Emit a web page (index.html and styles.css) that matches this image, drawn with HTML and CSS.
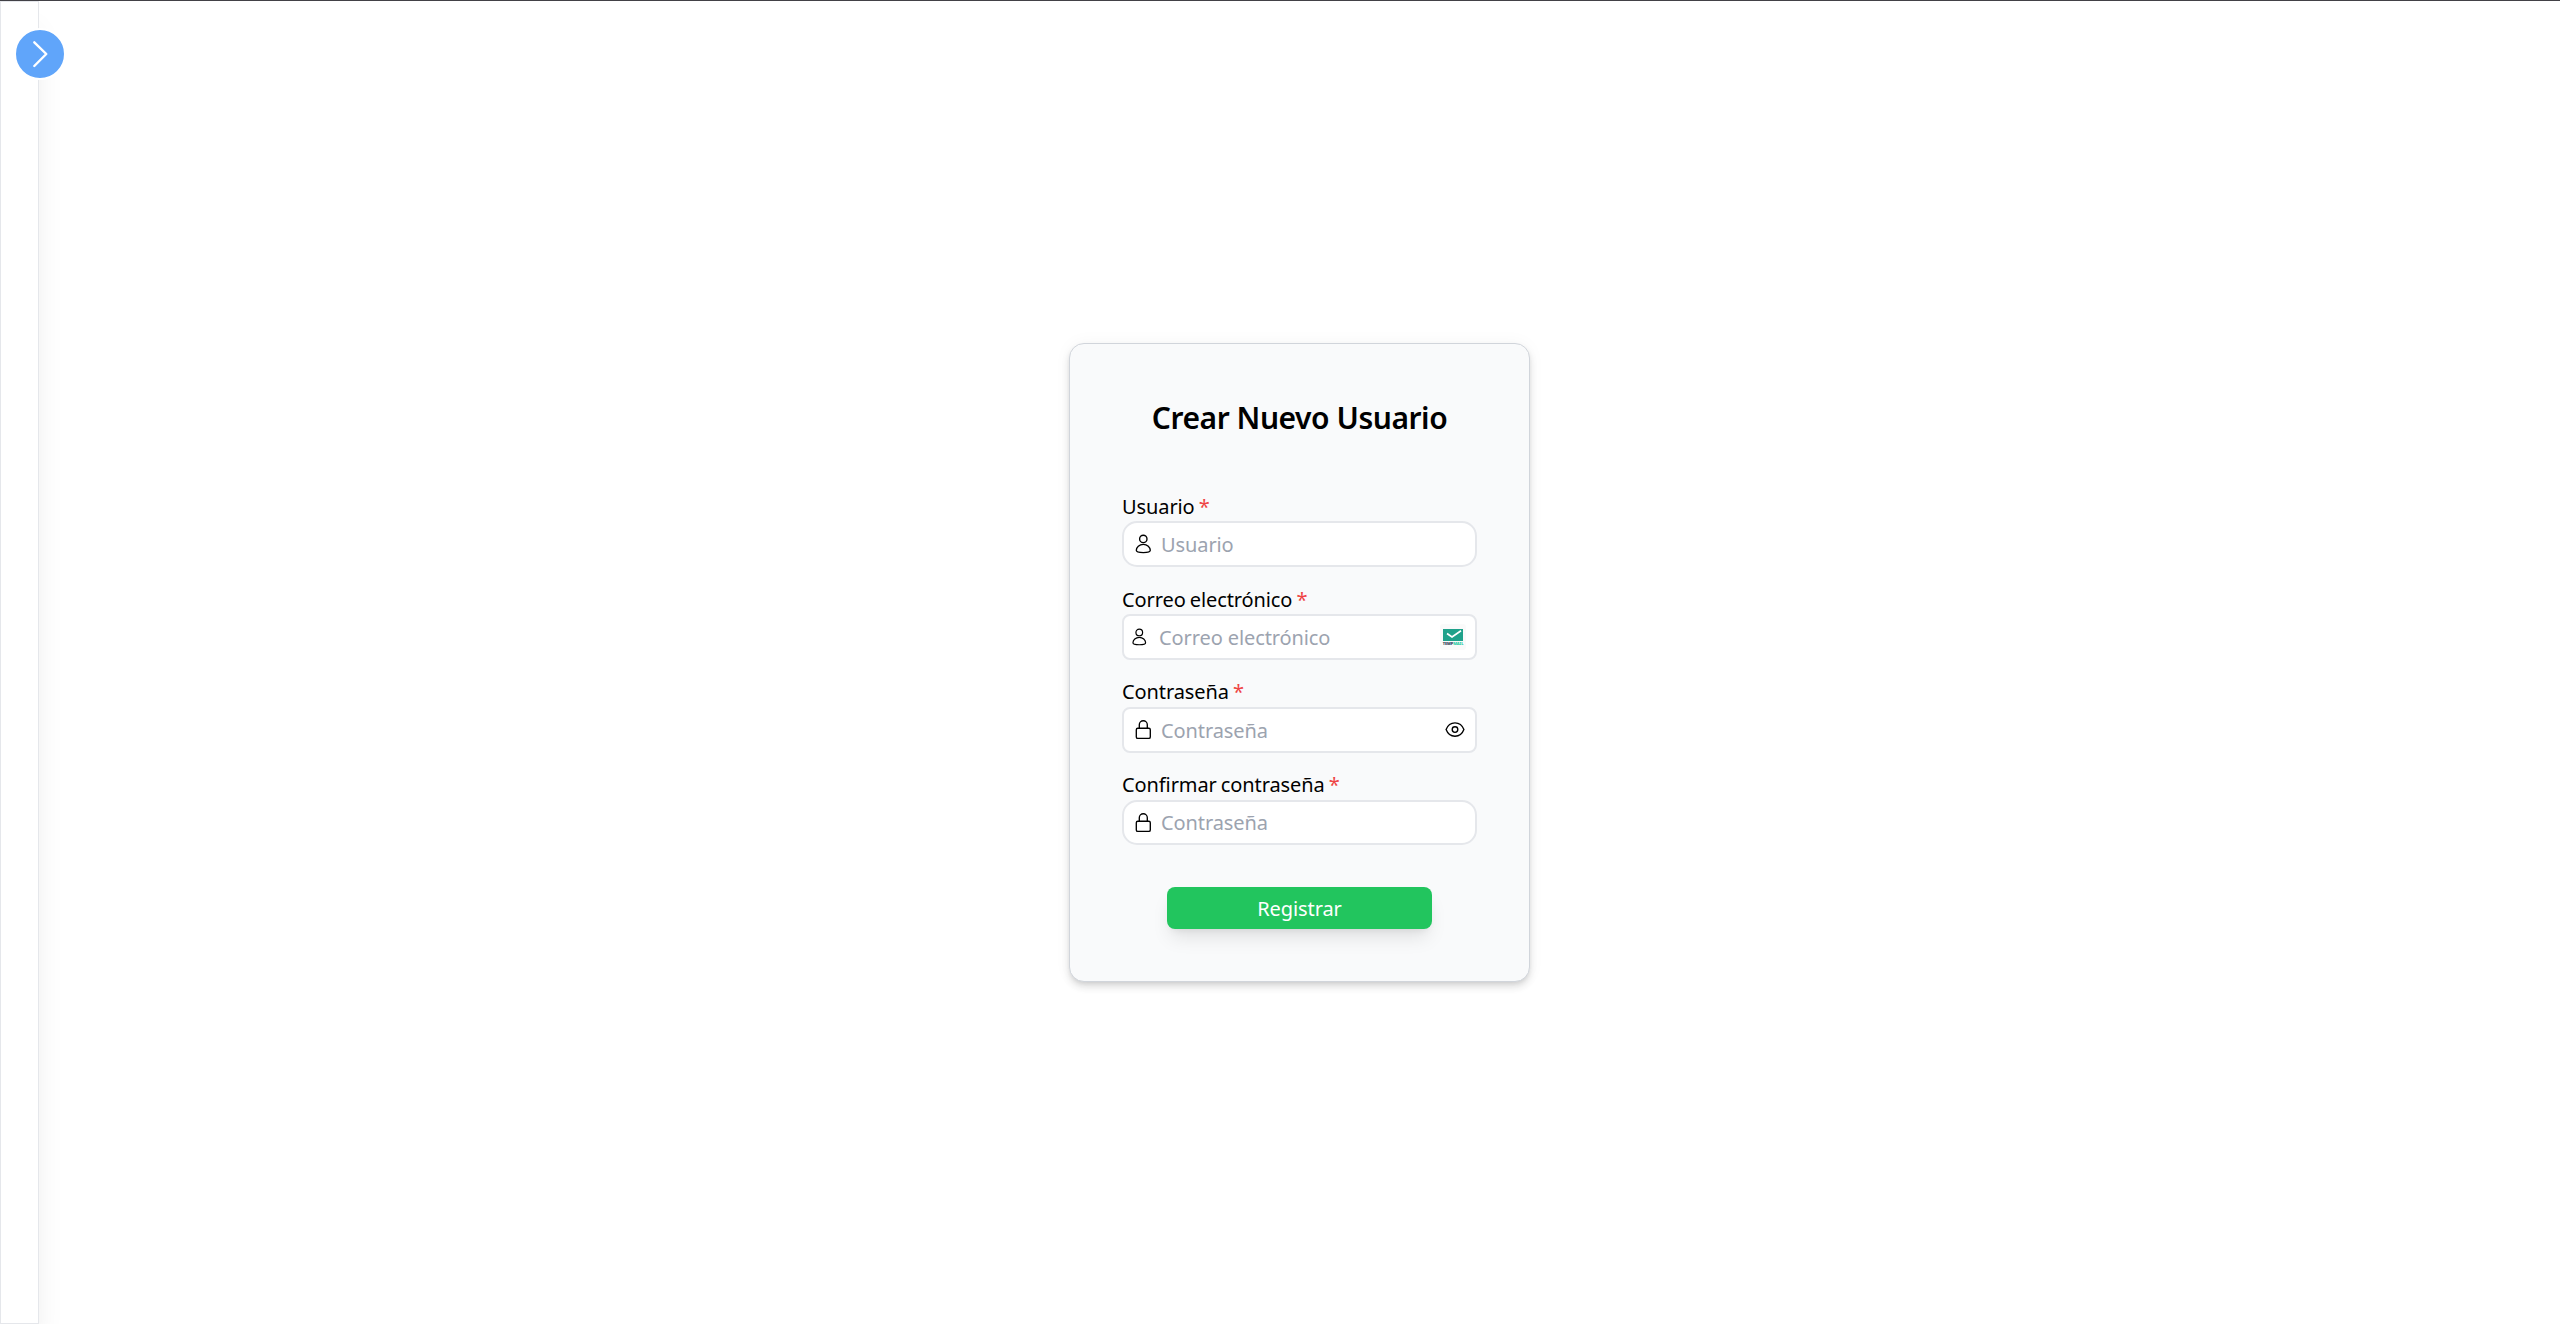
FILE: index.html
```html
<!DOCTYPE html>
<html lang="es">
<head>
<meta charset="utf-8">
<title>Crear Nuevo Usuario</title>
<link rel="stylesheet" href="styles.css">
</head>
<body>
<aside class="sidebar">
  <button class="toggle" aria-label="Abrir menú">
    <svg width="48" height="48" viewBox="0 0 48 48"><path d="M18.300 12.300 30.300 24 18.300 36" /></svg>
  </button>
</aside>
<main class="main">
  <form class="card">
    <h1 class="title">Crear Nuevo Usuario</h1>
    <div class="field">
      <label class="label" for="user">Usuario <span class="required">*</span></label>
      <div class="control round">
        <svg class="icon" viewBox="0 0 20 20"><circle cx="10.3" cy="4.900" r="3.700"/><path d="M10.300 10.300c-4 0-7 3-7 6 0 1.600 3.400 2.300 7 2.300s7-.7 7-2.300c0-3-3-6-7-6z"/></svg>
        <input class="input" id="user" placeholder="Usuario">
      </div>
    </div>
    <div class="field">
      <label class="label" for="mail">Correo electrónico <span class="required">*</span></label>
      <div class="control mail">
        <svg class="icon small" viewBox="0 0 20 20"><circle cx="10.3" cy="4.900" r="3.700"/><path d="M10.300 10.300c-4 0-7 3-7 6 0 1.600 3.400 2.300 7 2.300s7-.7 7-2.300c0-3-3-6-7-6z"/></svg>
        <input class="input" id="mail" placeholder="Correo electrónico">
        <span class="badge">
          <svg width="20" height="12" viewBox="0 0 20 12"><path fill="#1fa18a" d="M0 0h20v12H0z"/><path d="m4 4.500 5 3.500 9-6.300" fill="none" stroke="#fff" stroke-width="1.7"/></svg>
          <span class="brand">TEMP<span class="brand-end">MAIL</span></span>
        </span>
      </div>
    </div>
    <div class="field">
      <label class="label raised" for="pass">Contraseña <span class="required">*</span></label>
      <div class="control password">
        <svg class="icon" viewBox="0 0 20 20"><rect x="3.3" y="8.2" width="14" height="10.200" rx="1.5"/><path d="M6.300 8V4.700a4 4 0 0 1 8 0V8"/></svg>
        <input class="input" id="pass" placeholder="Contraseña">
        <svg class="icon" viewBox="0 0 20 20"><path d="M1.100 9.500C2.500 5.800 5.700 2.800 10 2.800s7.500 3 8.900 6.700c-1.400 3.700-4.600 6.700-8.900 6.700S2.500 13.200 1.100 9.500z"/><circle cx="10" cy="9.5" r="2.8"/></svg>
      </div>
    </div>
    <div class="field">
      <label class="label raised" for="confirm">Confirmar contraseña <span class="required">*</span></label>
      <div class="control round last">
        <svg class="icon" viewBox="0 0 20 20"><rect x="3.3" y="8.2" width="14" height="10.200" rx="1.5"/><path d="M6.300 8V4.700a4 4 0 0 1 8 0V8"/></svg>
        <input class="input" id="confirm" placeholder="Contraseña">
      </div>
    </div>
    <button class="submit" type="button">Registrar</button>
  </form>
</main>
</body>
</html>
```
FILE: styles.css
```css
* { box-sizing: border-box; }

body {
  display: flex;
  height: 1324px;
  margin: 0;
  border-top: 1px solid #424146;
  background: #fff;
  color: #000;
  font: 20px/30px "Noto Sans", sans-serif;
  overflow: hidden;
}

.sidebar {
  position: relative;
  flex: none;
  width: 39px;
  border: 1px solid #e5e7eb;
  box-shadow: 0 25px 31px -6px rgba(0, 0, 0, .1), 0 10px 12px -7px rgba(0, 0, 0, .04);
}

.toggle {
  position: absolute;
  top: 26px;
  left: 13px;
  width: 52px;
  height: 52px;
  padding: 0;
  border: 2px solid #fff;
  border-radius: 50%;
  background: #60a5fa;
}

.toggle svg {
  display: block;
  fill: none;
  stroke: #fff;
  stroke-width: 2.4;
  stroke-linecap: round;
  stroke-linejoin: round;
}

.main {
  display: flex;
  flex: 1;
  align-items: center;
  justify-content: center;
}

.card {
  display: flex;
  flex-direction: column;
  width: 461px;
  height: 639px;
  padding: 51px 52px 0;
  border: 1px solid #d1d5db;
  border-radius: 15px;
  background: #f9fafb;
  box-shadow: 0 5px 8px -1px rgba(0, 0, 0, .14), 0 2px 5px -2px rgba(0, 0, 0, .1), 0 0 18px rgba(0, 0, 0, .04);
}

.title {
  margin: 0 0 51px;
  font-size: 30px;
  font-weight: 600;
  line-height: 45px;
  letter-spacing: -.45px;
  text-align: center;
}

.field {
  display: flex;
  flex: none;
  flex-direction: column;
  height: 93px;
}

.label {
  height: 30px;
  line-height: 31px;
  letter-spacing: -.1px;
  word-spacing: -1px;
}

.raised { line-height: 29px; }

.required { color: #ef4444; }

.control {
  display: flex;
  align-items: center;
  height: 46px;
  padding: 0 9px;
  border: 2px solid #e5e7eb;
  border-radius: 8px;
  background: #fff;
}

.round { border-radius: 15px; }

.last { height: 45px; }

.mail {
  padding: 0 9px 0 6px;
}

.password { padding-right: 10px; }

.icon {
  flex: none;
  width: 20px;
  height: 20px;
  fill: none;
  stroke: #000;
  stroke-width: 1.35;
}

.small {
  width: 18px;
  height: 18px;
}

.input {
  flex: 1;
  min-width: 0;
  height: 100%;
  padding: 0 0 0 8px;
  border: 0;
  outline: 0;
  background: transparent;
  font: inherit;
  letter-spacing: -.1px;
}

.mail .input { padding-left: 11px; }

.input::placeholder { color: #9ca3af; opacity: 1; }

.badge {
  display: flex;
  flex-direction: column;
  align-items: center;
  width: 26px;
  height: 26px;
  padding-top: 5px;
  border-radius: 3px;
  background: #fafafa;
}

.brand {
  color: #17324d;
  font-size: 4px;
  font-weight: 800;
  line-height: 5px;
  letter-spacing: -.1px;
}

.brand-end { color: #20c9a0; }

.submit {
  flex: none;
  align-self: center;
  width: 265px;
  height: 42px;
  margin-top: 24px;
  padding: 2px 0 0;
  border: 0;
  border-radius: 8px;
  background: #22c55e;
  box-shadow: 0 12px 19px -4px rgba(0, 0, 0, .1), 0 5px 8px -5px rgba(0, 0, 0, .1);
  color: #fff;
  font: inherit;
  letter-spacing: -.1px;
}
```
